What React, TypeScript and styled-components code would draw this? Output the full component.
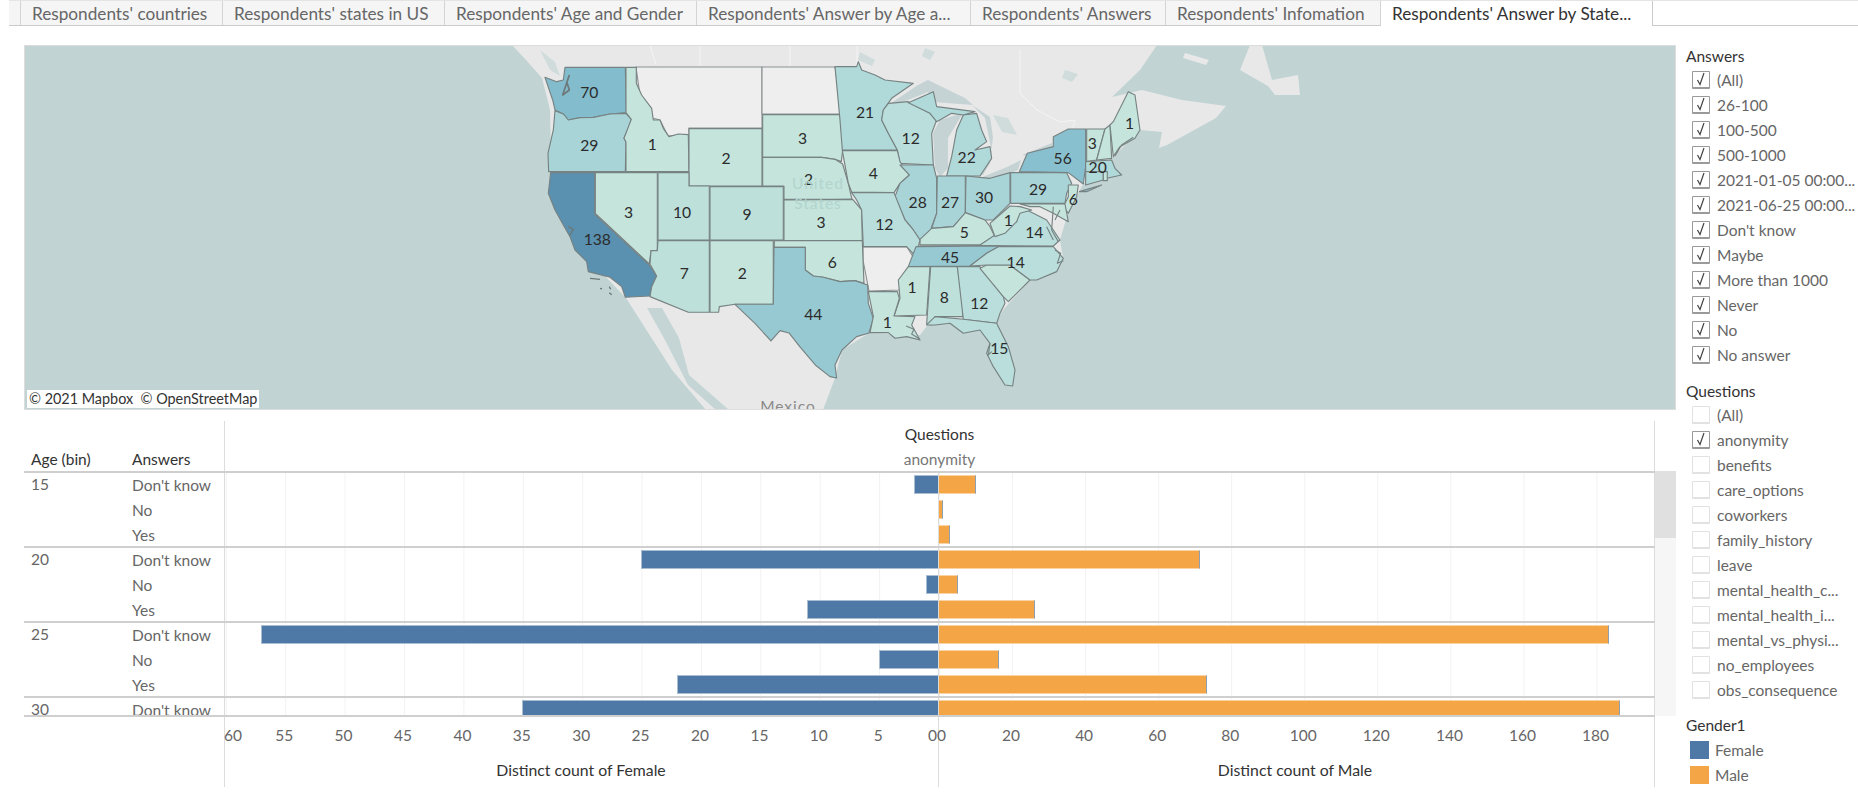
import React from 'react'
import styled, { createGlobalStyle } from 'styled-components'

const FONT = `Lato, "Open Sans", "Liberation Sans", sans-serif`

const GlobalStyle = createGlobalStyle`
  html, body {
    margin: 0;
    padding: 0;
    background: #fff;
    overflow: hidden;
  }
  body {
    font-family: ${FONT};
    font-size: 15.5px;
    color: #666;
  }
`

const TABS = [
  { label: "Respondents' countries", width: 202 },
  { label: "Respondents' states in US", width: 222 },
  { label: "Respondents' Age and Gender", width: 252 },
  { label: "Respondents' Answer by Age a...", width: 274 },
  { label: "Respondents' Answers", width: 195 },
  { label: "Respondents' Infomation", width: 215 },
  { label: "Respondents' Answer by State...", width: 273, active: true },
]

const ANSWERS = [
  '(All)', '26-100', '100-500', '500-1000', '2021-01-05 00:00...', '2021-06-25 00:00...',
  "Don't know", 'Maybe', 'More than 1000', 'Never', 'No', 'No answer',
]
const QUESTIONS = [
  '(All)', 'anonymity', 'benefits', 'care_options', 'coworkers', 'family_history', 'leave',
  'mental_health_c...', 'mental_health_i...', 'mental_vs_physi...', 'no_employees', 'obs_consequence',
]

const ROWS = [
  { age: '15', answer: "Don't know", female: 2, male: 10 },
  { answer: 'No', female: 0, male: 1 },
  { answer: 'Yes', female: 0, male: 3 },
  { age: '20', answer: "Don't know", female: 25, male: 71.5 },
  { answer: 'No', female: 1, male: 5.2 },
  { answer: 'Yes', female: 11, male: 26.2 },
  { age: '25', answer: "Don't know", female: 57, male: 183.4 },
  { answer: 'No', female: 5, male: 16.3 },
  { answer: 'Yes', female: 22, male: 73.3 },
  { age: '30', answer: "Don't know", female: 35, male: 186.5, clipped: true },
]

const FEMALE_PX = 11.88
const MALE_PX = 3.653

const shade = (n: number) => {
  if (n >= 100) return '#5a90b0'
  if (n >= 60) return '#82bccd'
  if (n >= 50) return '#89c0cf'
  if (n >= 40) return '#97c9d2'
  if (n >= 25) return '#a9d4d7'
  if (n >= 20) return '#b0d9d9'
  if (n >= 11) return '#b9dedb'
  if (n >= 7) return '#bde0db'
  return '#c4e4dc'
}

// outlines below are in the 3x crop frame, west half and east half
const WEST: [string, number][] = [
  ['135,82 316,82 319,218 270,222 220,232 180,233 145,240 130,222 105,210 98,180 75,112 110,125 130,120', 70],
  ['105,212 130,222 145,240 180,233 220,232 270,222 318,220 334,238 325,265 312,295 318,306 316,395 86,395 84,340 100,270', 29],
  ['318,82 349,82 349,130 365,165 395,205 400,240 420,240 430,265 447,290 475,282 505,284 507,395 318,395 318,306 312,295 334,238 318,218', 1],
  ['507,266 726,266 726,438 507,438', 2],
  ['728,224 960,224 968,270 968,332 964,365 945,358 905,352 728,352', 3],
  ['728,352 905,352 945,358 968,372 985,430 996,478 792,478 792,438 728,438', 2],
  ['792,480 998,478 1025,510 1027,602 792,602', 3],
  ['570,440 790,440 790,600 570,600', 9],
  ['414,398 507,398 507,438 568,438 568,600 414,600', 10],
  ['226,398 412,398 412,632 393,632 388,672 226,520', 3],
  ['92,398 224,398 224,522 388,675 410,708 395,740 390,768 316,772 305,740 270,712 205,695 200,665 165,630 150,590 130,555 105,510 85,460', 138],
  ['414,602 568,602 568,817 505,817 390,770 395,740 410,708 390,672 393,632 412,632', 7],
  ['570,602 760,602 760,793 645,793 598,800 596,817 570,817', 2],
  ['763,602 1027,602 1032,730 1005,722 960,725 910,712 880,708 856,690 856,622 763,622', 6],
  ['762,622 856,622 856,690 880,708 910,712 960,725 1005,722 1043,735 1045,790 1060,835 1047,879 1010,890 966,930 945,975 950,1014 930,1010 886,975 840,921 807,879 780,872 753,903 705,850 645,793 760,793', 44],
]

const EAST: [string, number][] = [
  ['45,50 110,50 115,35 125,60 165,75 195,90 280,100 215,145 190,180 185,210 205,250 232,300 67,300 60,210', 21],
  ['205,160 265,155 330,190 350,210 335,250 340,345 240,340 232,300 205,250 185,210 190,180', 12],
  ['265,158 340,125 350,170 465,185 430,195 395,190 350,215 330,190', 22],
  ['380,378 395,320 410,240 430,195 470,190 485,240 500,275 465,300 510,290 515,325 480,378', 22],
  ['67,302 232,302 240,335 268,375 240,400 222,428 95,426 85,400', 4],
  ['240,345 340,345 350,385 350,490 335,530 330,560 300,570 280,540 255,510 225,440 240,400 268,375', 28],
  ['352,378 436,378 436,490 400,530 335,535 350,490', 27],
  ['438,378 510,385 570,368 570,460 520,510 495,510 436,488', 30],
  ['300,585 300,568 335,535 400,530 436,488 495,510 510,530 525,560 480,585', 5],
  ['95,428 222,428 255,510 280,540 300,570 295,590 280,612 260,590 130,590 125,480 110,450', 12],
  ['265,650 288,590 540,588 500,610 450,648', 45],
  ['330,650 320,795 222,798 240,745 235,690 265,650', 1],
  ['332,650 412,650 430,760 428,800 345,800 335,825 320,822', 8],
  ['412,650 480,650 550,740 555,760 540,790 530,820 430,808', 12],
  ['480,655 500,645 570,645 630,690 565,755 550,740', 3],
  ['450,648 500,610 535,590 700,590 730,625 710,665 650,690 630,690 570,645 500,645', 14],
  ['320,825 345,800 430,808 530,820 535,830 565,890 585,960 578,1008 555,1005 520,950 500,910 510,880 480,840 430,850 390,820 345,825', 15],
  ['145,725 232,725 238,745 222,798 285,800 275,825 300,870 260,860 225,865 205,848 150,848 160,800', 1],
  ['300,585 480,585 525,555 555,530 590,515 600,470 640,490 680,510 720,570 700,588', 14],
  ['510,520 570,468 600,470 635,480 600,490 590,515 555,550 525,560', 1],
  ['572,368 740,368 755,400 740,430 735,460 572,460', 29],
  ['598,365 622,310 700,290 700,260 745,237 797,237 797,350 790,402 745,368', 56],
  ['778,425 845,405 800,425', 56],
  ['745,405 775,405 770,440 745,490 730,470 745,440', 6],
  ['600,462 735,462 745,515 700,490 660,470 630,470', 6],
  ['800,237 855,237 830,330 800,335', 3],
  ['830,330 855,237 870,225 875,325', 1],
  ['870,225 880,215 925,125 945,135 960,240 945,265 900,290 880,320', 1],
  ['797,335 875,330 885,355 905,375 860,385 850,365 797,365', 20],
  ['797,365 850,365 850,390 797,405', 20],
  ['850,365 862,365 862,392 850,392', 6],
]

const WEST_LABELS: [string, number, number][] = [
  ['70', 208, 155], ['29', 208, 315], ['1', 397, 312], ['2', 618, 355], ['3', 848, 293],
  ['2', 866, 418], ['3', 326, 515], ['10', 486, 515], ['9', 681, 523], ['3', 903, 545],
  ['138', 232, 597], ['7', 493, 700], ['2', 667, 700], ['6', 937, 665], ['44', 880, 823],
]
const EAST_LABELS: [string, number, number][] = [
  ['21', 135, 185], ['12', 272, 263], ['22', 440, 322], ['4', 160, 370], ['28', 293, 455],
  ['27', 390, 455], ['30', 492, 442], ['56', 728, 325], ['29', 654, 416], ['3', 817, 278],
  ['20', 833, 352], ['1', 929, 218], ['6', 760, 447], ['1', 565, 510], ['5', 433, 545],
  ['14', 643, 545], ['45', 390, 622], ['14', 587, 635], ['1', 276, 710], ['8', 373, 740],
  ['12', 478, 760], ['1', 202, 815], ['15', 538, 895], ['12', 193, 523],
]

const Page = styled.div`
  width: 1858px;
  height: 803px;
  overflow: hidden;
  background: #fff;
`

const TabBar = styled.div`
  display: flex;
  height: 24px;
  margin-left: 9px;
  padding-left: 11px;
  background: #f5f5f5;
  border-top: 1px solid #e4e4e4;
  border-bottom: 1px solid #cbcbcb;
`

const Tab = styled.div<{ $active?: boolean; $width: number }>`
  box-sizing: border-box;
  width: ${(p) => p.$width}px;
  height: ${(p) => (p.$active ? 25 : 24)}px;
  padding-left: 11px;
  border-left: 1px solid #d4d4d4;
  border-right: ${(p) => (p.$active ? '1px solid #cbcbcb' : 'none')};
  background: ${(p) => (p.$active ? '#fff' : 'transparent')};
  color: ${(p) => (p.$active ? '#333' : '#666')};
  font-size: 17.2px;
  line-height: 25px;
  white-space: nowrap;
`

const TabFill = styled.div`
  flex: 1;
  background: #fff;
`

const Main = styled.div`
  display: grid;
  grid-template-columns: 1652px 172px;
  column-gap: 10px;
  padding: 19px 0 0 24px;
`

const LeftColumn = styled.div`
  display: flex;
  flex-direction: column;
  gap: 11px;
`

const MapPanel = styled.div`
  position: relative;
  box-sizing: border-box;
  height: 365px;
  border: 1px solid #dcdcdc;
  background: #c1d3d3;
  overflow: hidden;
`

const MapDrawing = styled.svg`
  display: block;
  width: 1650px;
  height: 363px;
`

const Attribution = styled.div`
  position: absolute;
  left: 2px;
  bottom: 1px;
  height: 18px;
  padding: 0 2px;
  background: #fff;
  color: #333;
  font-size: 14.4px;
  line-height: 18px;
  white-space: pre;
`

const Chart = styled.div`
  display: flex;
  flex-direction: column;
`

const ChartHeader = styled.div`
  display: grid;
  grid-template-columns: 108px 92px 1431px;
  height: 50px;
`

const ColumnTitle = styled.div<{ $inset: number }>`
  align-self: end;
  padding-left: ${(p) => p.$inset}px;
  height: 24px;
  line-height: 22px;
  color: #333;
`

const QuestionHead = styled.div`
  box-sizing: border-box;
  display: flex;
  flex-direction: column;
  align-items: center;
  border-left: 1px solid #dcdcdc;
  border-right: 1px solid #dcdcdc;
  padding-top: 1px;
  line-height: 25px;
`

const QuestionName = styled.span`
  color: #333;
`

const QuestionValue = styled.span`
  color: #777;
`

const ChartBody = styled.div`
  display: flex;
  height: 246px;
`

const Table = styled.div`
  width: 1631px;
  overflow: hidden;
`

const Row = styled.div<{ $first: boolean; $clipped?: boolean }>`
  display: grid;
  grid-template-columns: 108px 92px 714px 717px;
  box-sizing: border-box;
  height: ${(p) => (p.$clipped ? 21 : 25)}px;
  border-top: ${(p) => (p.$first ? '2px solid #cfcfcf' : 'none')};
  border-bottom: ${(p) => (p.$clipped ? '2px solid #cfcfcf' : 'none')};
  overflow: hidden;
`

const AgeLabel = styled.div`
  padding-left: 7px;
  color: #666;
  line-height: 22px;
`

const AnswerLabel = styled.div<{ $first: boolean }>`
  padding-top: ${(p) => (p.$first ? 0 : 2)}px;
  color: #666;
  line-height: 25px;
  white-space: nowrap;
`

const Side = styled.div<{ $female?: boolean; $first: boolean; $step: number }>`
  box-sizing: border-box;
  display: flex;
  justify-content: ${(p) => (p.$female ? 'flex-end' : 'flex-start')};
  padding-top: ${(p) => (p.$first ? 2 : 4)}px;
  border-left: 1px solid #dcdcdc;
  border-right: ${(p) => (p.$female ? 'none' : '1px solid #dcdcdc')};
  background-image: linear-gradient(to right, #f2f2f2 1px, transparent 1px);
  background-size: ${(p) => p.$step}px 100%;
  background-position: ${(p) => (p.$female ? '0.8px 0' : '0 0')};
`

const FemaleBar = styled.div<{ $clipped?: boolean }>`
  box-sizing: border-box;
  height: ${(p) => (p.$clipped ? 16 : 19)}px;
  background: #4e79a7;
  border: 1px solid #a9bdd3;
  border-right: none;
`

const MaleBar = styled.div<{ $clipped?: boolean }>`
  box-sizing: border-box;
  height: ${(p) => (p.$clipped ? 16 : 19)}px;
  background: #f4a647;
  border-top: 1px solid #f9d3a3;
  border-bottom: 1px solid #f9d3a3;
  border-right: 1px solid #8c9fb3;
`

const ScrollTrack = styled.div`
  width: 21px;
  height: 245px;
  background: #f6f6f6;
`

const ScrollThumb = styled.div`
  height: 67px;
  background: #e0e0e0;
`

const AxisRow = styled.div`
  display: grid;
  grid-template-columns: 200px 1431px;
  height: 70px;
`

const AxisDrawing = styled.svg`
  display: block;
  width: 1431px;
  height: 70px;
`

const AxisTick = styled.text`
  fill: #666;
  font-size: 15.5px;
  text-anchor: middle;
`

const AxisTitle = styled.text`
  fill: #333;
  font-size: 15.8px;
  text-anchor: middle;
`

const Sidebar = styled.div`
  display: flex;
  flex-direction: column;
`

const FilterTitle = styled.div<{ $gap: number }>`
  height: 22px;
  margin-top: ${(p) => p.$gap}px;
  color: #333;
  line-height: 22px;
`

const CheckRow = styled.div`
  display: flex;
  align-items: center;
  gap: 7px;
  height: 25px;
  padding-left: 6px;
  color: #666;
  white-space: nowrap;
`

const CheckBox = styled.div<{ $checked: boolean }>`
  box-sizing: border-box;
  width: 18px;
  height: 18px;
  flex: none;
  display: flex;
  align-items: center;
  justify-content: center;
  border: 1px solid ${(p) => (p.$checked ? '#9a9a9a' : '#e2e2e2')};
  border-bottom-width: 2px;
  border-radius: 1px;
  background: #fff;
`

const Legend = styled.div`
  padding-top: 1px;
`

const LegendRow = styled.div`
  display: flex;
  align-items: center;
  gap: 6px;
  height: 25px;
  padding-left: 4px;
  color: #666;
`

const Swatch = styled.div<{ $color: string }>`
  width: 19px;
  height: 18px;
  background: ${(p) => p.$color};
`

const StateLabel = styled.text`
  fill: #2b2b2b;
  font-size: 47px;
  text-anchor: middle;
  dominant-baseline: central;
`

const MapText = styled.text<{ $tone: string }>`
  fill: ${(p) => p.$tone};
  font-size: 15.5px;
  letter-spacing: 1px;
  text-anchor: middle;
`

const Tick = () => (
  <svg width="14" height="16" viewBox="0 0 14 16">
    <path d="M3.5 9 L6 13.5 L10 2" fill="none" stroke="#444" strokeWidth="1.2" />
  </svg>
)

const Filter = ({ label, checked }: { label: string; checked: boolean }) => (
  <CheckRow>
    <CheckBox $checked={checked}>{checked && <Tick />}</CheckBox>
    {label}
  </CheckRow>
)

const UsMap = () => (
  <MapDrawing viewBox="25 46 1650 363">
    {/* land */}
    <polygon
      fill="#e8e8e8"
      points="512,45 1157,45 1140,70 1112,97 1142,90 1182,100 1226,106 1216,118 1167,145 1159,148 1162,132 1140,130 1113,157 1083,184 1068,213 1060,240 1063,258 1030,280 1003,310 997,320 930,322 920,335 869,333 842,350 835,378 823,410 737,410 706,410 672,370 626,298 580,250 552,200 550,110 542,78 526,60"
    />
    <polygon fill="#e8e8e8" points="1240,70 1250,45 1262,45 1272,80 1298,75 1300,95 1275,95 1268,86" />
    <polygon fill="#e8e8e8" points="1185,53 1209,60 1206,65 1183,58" />
    <polygon fill="#c5d5d5" points="647,308 662,308 679,338 689,375 729,410 716,410 688,385 665,340" />
    {/* province lines */}
    <g fill="none" stroke="#f4f4f4" strokeWidth="1">
      <path d="M650 45 L656 65 M700 45 L700 66 M790 45 L790 66 M857 45 L857 66" />
      <path d="M1020 50 L1020 93 L1037 110 L1060 122 L1075 120 L1073 128" />
    </g>
    <g fill="#d0dcdc">
      <polygon points="540,50 555,62 560,76 550,70" />
      <polygon points="860,52 875,60 872,66 858,60" />
      <polygon points="1065,70 1078,74 1072,82 1062,78" />
      <polygon points="925,48 935,52 930,60 922,56" />
      <polygon points="993,115 1008,118 1017,135 1002,132" />
    </g>
    {/* US states with no data */}
    <g fill="#eeeeee" stroke="#8a9191" strokeWidth="1.1">
      <polygon points="636,67 762,67 762,128 689,128 689,135 668,136 660,120 652,118 640,95" />
      <polygon points="762,67 835,67 842,114 762,114" />
      <polygon points="863,247 907,247 915,260 899,290 869,291 863,260" />
    </g>
    {/* great lakes */}
    <g fill="#c6d3d4">
      <polygon points="891,103 918,85 928,80 965,98 973,105 933,102 928,92 903,102" />
      <polygon points="933,133 940,120 963,113 948,138 948,168 940,177 935,168" />
      <polygon points="972,105 990,117 993,137 990,163 983,175 977,176 992,152 985,118" />
      <polygon points="980,178 1007,167 1021,160 1018,170 990,182" />
      <polygon points="1022,155 1052,143 1053,150 1027,156" />
    </g>
    <g stroke="#778282" strokeWidth="3.4" strokeLinejoin="round" transform="translate(520 40) scale(0.3333)">
      {WEST.map(([points, n]) => (
        <polygon key={points} points={points} fill={shade(n)} />
      ))}
      <path d="M148 105 L128 165 L148 150 L140 125" fill="none" stroke="#6d7878" strokeWidth="5" />
      <path d="M210 715 L240 718 M240 745 L246 747 M268 740 L272 748 M268 758 L275 764 M145 560 L160 568 L150 585" fill="none" stroke="#6d7878" strokeWidth="4" />
    </g>
    <g stroke="#778282" strokeWidth="3.4" strokeLinejoin="round" transform="translate(820 50) scale(0.3333)">
      {EAST.map(([points, n]) => (
        <polygon key={points} points={points} fill={shade(n)} />
      ))}
      <path d="M700 470 L695 540 L715 575 M720 480 L705 510 M680 530 L700 570 M705 600 L722 610 L712 640 L730 632 M258 828 L282 838 L275 852 L300 868 M940 262 L905 285 L885 318 M510 880 L505 915 L515 905" fill="none" />
    </g>
    <g transform="translate(520 40) scale(0.3333)">
      {WEST_LABELS.map(([text, x, y]) => (
        <StateLabel key={`${text}-${x}`} x={x} y={y}>{text}</StateLabel>
      ))}
    </g>
    <g transform="translate(820 50) scale(0.3333)">
      {EAST_LABELS.map(([text, x, y]) => (
        <StateLabel key={`${text}-${x}`} x={x} y={y}>{text}</StateLabel>
      ))}
    </g>
    <MapText $tone="#b2d4ce" x={818} y={189}>United</MapText>
    <MapText $tone="#b2d4ce" x={818} y={209}>States</MapText>
    <MapText $tone="#8a8a8a" x={788} y={412}>Mexico</MapText>
  </MapDrawing>
)

const Axis = () => (
  <AxisDrawing viewBox="0 0 1431 70">
    <line x1="0.5" y1="0" x2="0.5" y2="70" stroke="#dcdcdc" />
    <line x1="714.5" y1="0" x2="714.5" y2="70" stroke="#dcdcdc" />
    <line x1="1430.5" y1="0" x2="1430.5" y2="70" stroke="#dcdcdc" />
    {[55, 50, 45, 40, 35, 30, 25, 20, 15, 10, 5].map((v) => (
      <AxisTick key={v} x={713.6 - v * FEMALE_PX} y={24}>{v}</AxisTick>
    ))}
    <AxisTick x={9} y={24}>60</AxisTick>
    <AxisTick x={708.5} y={24}>0</AxisTick>
    <AxisTick x={717.5} y={24}>0</AxisTick>
    {[20, 40, 60, 80, 100, 120, 140, 160, 180].map((v) => (
      <AxisTick key={v} x={714 + v * MALE_PX} y={24}>{v}</AxisTick>
    ))}
    <AxisTitle x={357} y={59}>Distinct count of Female</AxisTitle>
    <AxisTitle x={1071} y={59}>Distinct count of Male</AxisTitle>
  </AxisDrawing>
)

const App = () => (
  <Page>
    <GlobalStyle />
    <TabBar>
      {TABS.map((t) => (
        <Tab key={t.label} $active={t.active} $width={t.width}>{t.label}</Tab>
      ))}
      <TabFill />
    </TabBar>
    <Main>
      <LeftColumn>
        <MapPanel>
          <UsMap />
          <Attribution>© 2021 Mapbox  © OpenStreetMap</Attribution>
        </MapPanel>
        <Chart>
          <ChartHeader>
            <ColumnTitle $inset={7}>Age (bin)</ColumnTitle>
            <ColumnTitle $inset={0}>Answers</ColumnTitle>
            <QuestionHead>
              <QuestionName>Questions</QuestionName>
              <QuestionValue>anonymity</QuestionValue>
            </QuestionHead>
          </ChartHeader>
          <ChartBody>
            <Table>
              {ROWS.map((r, i) => (
                <Row key={i} $first={!!r.age} $clipped={r.clipped}>
                  <AgeLabel>{r.age}</AgeLabel>
                  <AnswerLabel $first={!!r.age}>{r.answer}</AnswerLabel>
                  <Side $female $first={!!r.age} $step={FEMALE_PX * 5}>
                    {r.female > 0 && <FemaleBar $clipped={r.clipped} style={{ width: r.female * FEMALE_PX }} />}
                  </Side>
                  <Side $first={!!r.age} $step={MALE_PX * 20}>
                    <MaleBar $clipped={r.clipped} style={{ width: r.male * MALE_PX }} />
                  </Side>
                </Row>
              ))}
            </Table>
            <ScrollTrack>
              <ScrollThumb />
            </ScrollTrack>
          </ChartBody>
          <AxisRow>
            <div />
            <Axis />
          </AxisRow>
        </Chart>
      </LeftColumn>
      <Sidebar>
        <FilterTitle $gap={0}>Answers</FilterTitle>
        {ANSWERS.map((a) => (
          <Filter key={a} label={a} checked />
        ))}
        <FilterTitle $gap={13}>Questions</FilterTitle>
        {QUESTIONS.map((q) => (
          <Filter key={q} label={q} checked={q === 'anonymity'} />
        ))}
        <FilterTitle $gap={12}>Gender1</FilterTitle>
        <Legend>
          <LegendRow><Swatch $color="#4e79a7" />Female</LegendRow>
          <LegendRow><Swatch $color="#f4a647" />Male</LegendRow>
        </Legend>
      </Sidebar>
    </Main>
  </Page>
)

export default App
